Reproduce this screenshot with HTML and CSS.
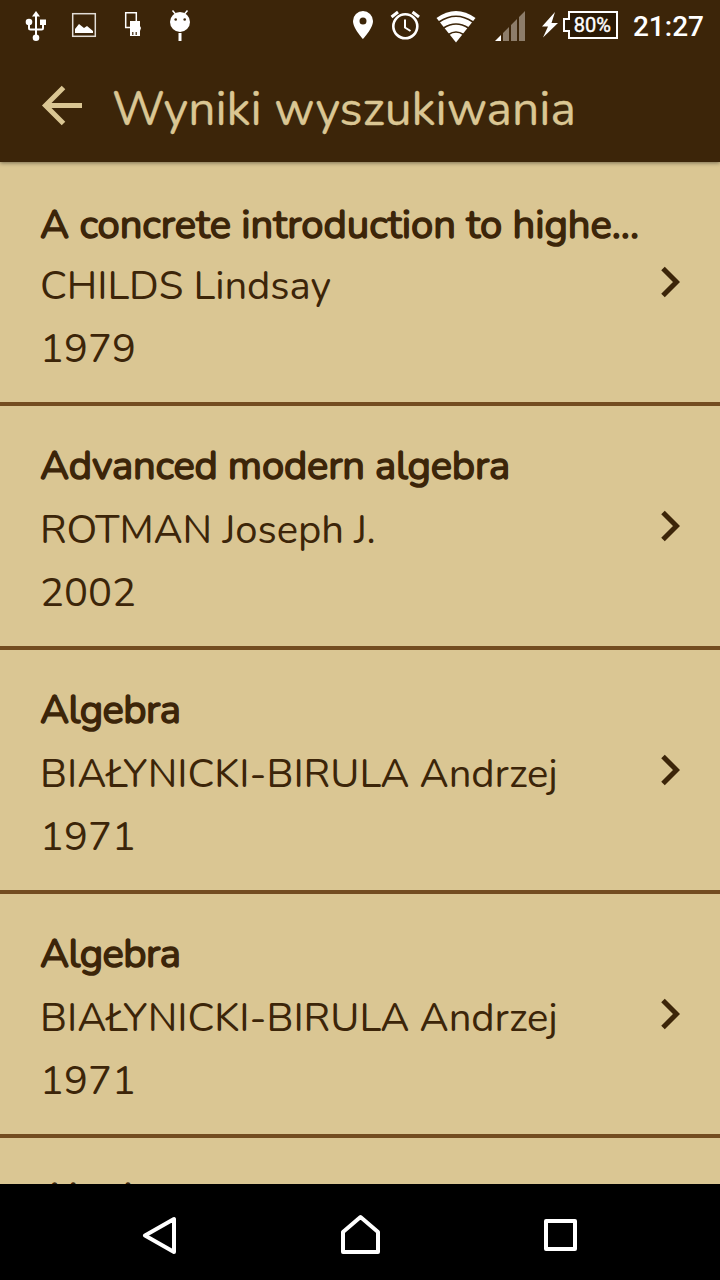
FILE: index.html
```html
<!DOCTYPE html>
<html lang="pl">
<head>
<meta charset="utf-8">
<title>Wyniki wyszukiwania</title>
<link rel="stylesheet" href="styles.css">
</head>
<body>
<div class="statusbar">
<svg class="status-icons" width="720" height="50" viewBox="0 0 720 50" fill="#fff">
<g stroke="#fff" stroke-width="2" fill="none"><path d="M36 38V15M36 29.500H30.500Q29 29.500 29 28V22M36 29.500H41.500Q43 29.500 43 28V22"/></g>
<path d="M36 11l4 5.500h-8z"/><circle cx="29" cy="22" r="3.300"/><rect x="40" y="19.500" width="6" height="5.500"/><circle cx="36" cy="37.800" r="3.300"/>
<rect x="72.700" y="13.700" width="22.600" height="22.600" fill="none" stroke="#e2ddd7" stroke-width="1.500"/><path d="M75 33v-4l4-5 5 4 3-2 6 5v2z"/>
<path d="M130 27.500h-4.300v-14.800h10.600V21" fill="none" stroke="#fff" stroke-width="1.500"/><path d="M130 21h10v5l1 2-1 3v5h-10z"/><path d="M132.800 32v3M136.200 32v3" stroke="#3c2509" stroke-width="1.200"/>
<circle cx="180" cy="22" r="10"/><path d="M175.500 14l-3-3.500M184.500 14l3-3.500" stroke="#fff" stroke-width="1.500"/><path d="M178.500 33h3v8h-3z"/><circle cx="175.700" cy="19.500" r="1.300" fill="#3c2509"/><circle cx="184.700" cy="19.500" r="1.300" fill="#3c2509"/>
<path fill-rule="evenodd" d="M363 11a10 10 0 0 0-10 10c0 7.500 10 18 10 18s10-10.500 10-18a10 10 0 0 0-10-10zm0 6.500a3.500 3.500 0 1 1 0 7 3.500 3.500 0 0 1 0-7z"/>
<g fill="none" stroke="#fff" stroke-width="2.600"><circle cx="405.300" cy="26.300" r="12"/><path d="M405 19.500v8l5.500 3.500" stroke-width="2"/><path d="M391.500 17l6.500-5M419 17l-6.500-5" stroke-width="3"/></g>
<path d="M456 42.500L436.500 18Q456 4 475.500 18z"/><g fill="none" stroke="#3c2509" stroke-width="1.600"><path d="M439 22Q456 10.500 473 22M443.500 28Q456 20 468.500 28M448.500 34.500Q456 29.500 463.500 34.500"/></g>
<path d="M495 41l6-6v6z"/><path fill="#8d7d6a" d="M503 41v-8l6-6v14zM511 41V25l6-6v22zM519 41V17l6-6v30z"/>
<path d="M555 12l-13 14.500h6l-5 11L558 23h-6.500z"/>
<path d="M569 12h48v26h-48v-7h-5V19h5z" fill="#2a1904" stroke="#fff" stroke-width="2"/>
</svg>
<span class="battery">80%</span><span class="clock">21:27</span>
</div>
<header class="appbar">
<svg class="back" width="42" height="42" viewBox="0 0 42 42" fill="none" stroke="#dac693" stroke-width="5"><path d="M22.500 2.500L4.500 20.500l18 18M4.500 20.500H41"/></svg>
<h1 class="heading">Wyniki wyszukiwania</h1>
</header>
<main class="results">
<article class="row first"><div class="info"><h2 class="title long">A concrete introduction to highe...</h2><p class="author">CHILDS Lindsay</p><p class="year">1979</p></div><svg class="chevron" width="20" height="32" viewBox="0 0 20 32"><path d="M3 2.500L16.500 16 3 29.500"/></svg></article>
<article class="row"><div class="info"><h2 class="title medium">Advanced modern algebra</h2><p class="author">ROTMAN Joseph J.</p><p class="year">2002</p></div><svg class="chevron" width="20" height="32" viewBox="0 0 20 32"><path d="M3 2.500L16.500 16 3 29.500"/></svg></article>
<article class="row"><div class="info"><h2 class="title short">Algebra</h2><p class="author">BIAŁYNICKI-BIRULA Andrzej</p><p class="year">1971</p></div><svg class="chevron" width="20" height="32" viewBox="0 0 20 32"><path d="M3 2.500L16.500 16 3 29.500"/></svg></article>
<article class="row"><div class="info"><h2 class="title short">Algebra</h2><p class="author">BIAŁYNICKI-BIRULA Andrzej</p><p class="year">1971</p></div><svg class="chevron" width="20" height="32" viewBox="0 0 20 32"><path d="M3 2.500L16.500 16 3 29.500"/></svg></article>
<article class="row"><div class="info"><h2 class="title short">Algebra</h2></div></article>
</main>
<nav class="navbar">
<svg width="720" height="96" viewBox="0 0 720 96" fill="none" stroke="#fff" stroke-width="4" stroke-linejoin="round"><path d="M174 35v33L145 51.500zM343 68V48l17.500-15L378 48v20zM546 37h29v28h-29z"/></svg>
</nav>
</body>
</html>
```
FILE: styles.css
```css
* { box-sizing: border-box; }
body { margin: 0; width: 720px; height: 1280px; overflow: hidden; display: flex; flex-direction: column; background: #dac693; color: #3c2509; font-family: Nunito, Lato, "Noto Sans", sans-serif; }
.statusbar { position: relative; z-index: 2; height: 50px; flex: none; display: flex; justify-content: flex-end; gap: 22px; padding-right: 16px; background: #3c2509; color: #fff; font-family: Roboto, sans-serif; line-height: 50px; }
.status-icons { position: absolute; left: 0; top: 0; }
.battery { position: relative; font-size: 20px; font-weight: 400; -webkit-text-stroke: 0.4px #fff; }
.clock { position: relative; font-size: 28px; font-weight: 500; line-height: 53px; }
.appbar { position: relative; z-index: 1; height: 112px; flex: none; display: flex; align-items: center; gap: 29px; padding-left: 41px; background: #3c2509; color: #dac693; box-shadow: 0 1px 4px rgba(0,0,0,.45); }
.heading { margin: 6px 0 0; font-size: 48px; font-weight: 400; line-height: 60px; white-space: nowrap; -webkit-text-stroke: 0.3px #dac693; }
.results { flex: 1; min-height: 0; overflow: hidden; }
.row { height: 244px; display: flex; align-items: flex-start; justify-content: space-between; padding: 30px 40px 0 40px; border-bottom: 4px solid #734c20; }
.info { width: 605px; font-size: 40px; line-height: 63px; white-space: nowrap; }
.title, .author, .year { margin: 0; font-size: inherit; font-weight: 400; }
.author { letter-spacing: -0.06px; }
.title { -webkit-text-stroke: 1.5px #3c2509; line-height: 61px; margin-bottom: 2px; }
.first .title { line-height: 67px; margin-bottom: -4px; }
.long { letter-spacing: -0.04px; }
.medium { letter-spacing: -0.18px; }
.short { letter-spacing: -0.55px; }
.chevron { margin-top: 74px; fill: none; stroke: #3c2509; stroke-width: 5; }
.navbar { height: 96px; flex: none; background: #000; }
```
